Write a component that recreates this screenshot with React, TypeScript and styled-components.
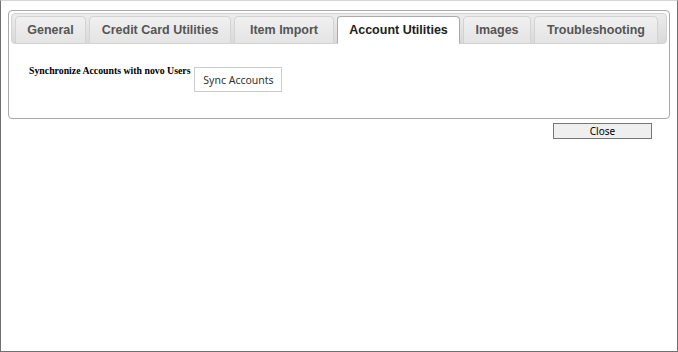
import React from "react";
import styled, { createGlobalStyle } from "styled-components";

const Global = createGlobalStyle`
  html, body { margin: 0; padding: 0; background: #fff; }
  * { box-sizing: border-box; }
`;

const Frame = styled.div`
  width: 678px;
  height: 352px;
  border: 1px solid #707070;
  border-top-color: #d6d6d6;
  background: #fff;
  padding: 9px 0 0 7px;
  display: flex;
  flex-direction: column;
`;

const Panel = styled.div`
  width: 662px;
  height: 109px;
  border: 1px solid #aaaaaa;
  border-radius: 4px;
  padding: 2px 2px 0 2px;
  display: flex;
  flex-direction: column;
`;

const Nav = styled.div`
  height: 31px;
  border: 1px solid #d3d3d3;
  border-radius: 4px;
  background: linear-gradient(#ececec, #d9d9d9);
  padding: 2px 0 0 3px;
  display: flex;
  gap: 3px;
  align-items: flex-start;
`;

const Tab = styled.div<{ $active?: boolean; $w: number }>`
  width: ${(p) => p.$w}px;
  height: 28px;
  margin-bottom: -1px;
  border: 1px solid ${(p) => (p.$active ? "#aaaaaa" : "#d3d3d3")};
  border-bottom-color: ${(p) => (p.$active ? "#ffffff" : "#d3d3d3")};
  border-radius: 4px 4px 0 0;
  background: ${(p) => (p.$active ? "#ffffff" : "linear-gradient(#f0f0f0, #e4e4e4)")};
  color: ${(p) => (p.$active ? "#212121" : "#555555")};
  font-family: "Liberation Sans", Arial, sans-serif;
  font-weight: bold;
  font-size: 12.5px;
  line-height: 26px;
  text-align: center;
  white-space: nowrap;
`;

const Content = styled.div`
  padding: 20px 0 0 18px;
  display: flex;
  align-items: flex-start;
  gap: 4px;
`;

const Label = styled.span`
  font-family: "Liberation Serif", "Times New Roman", serif;
  font-weight: bold;
  font-size: 9.8px;
  line-height: 12px;
  color: #000;
  padding-top: 1px;
`;

const SyncButton = styled.button`
  margin-top: 3px;
  width: 88px;
  height: 25px;
  border: 1px solid #cccccc;
  background: #fff;
  color: #333;
  font-family: "Noto Sans", "Open Sans", sans-serif;
  font-size: 10.5px;
  padding: 0;
  cursor: pointer;
`;

const Footer = styled.div`
  width: 662px;
  display: flex;
  justify-content: flex-end;
  padding: 4px 18px 0 0;
`;

const CloseButton = styled.button`
  width: 99px;
  height: 16px;
  border: 1px solid #767676;
  border-radius: 0;
  background: #efefef;
  color: #000;
  font-family: "Noto Sans", "Open Sans", sans-serif;
  font-size: 10px;
  line-height: 12px;
  padding: 0;
  cursor: pointer;
`;

const tabs: { label: string; w: number }[] = [
  { label: "General", w: 71 },
  { label: "Credit Card Utilities", w: 142 },
  { label: "Item Import", w: 100 },
  { label: "Account Utilities", w: 123 },
  { label: "Images", w: 68 },
  { label: "Troubleshooting", w: 124 },
];

export default function App() {
  return (
    <>
      <Global />
      <Frame>
        <Panel>
          <Nav>
            {tabs.map((t) => (
              <Tab key={t.label} $w={t.w} $active={t.label === "Account Utilities"}>
                {t.label}
              </Tab>
            ))}
          </Nav>
          <Content>
            <Label>Synchronize Accounts with novo Users</Label>
            <SyncButton>Sync Accounts</SyncButton>
          </Content>
        </Panel>
        <Footer>
          <CloseButton>Close</CloseButton>
        </Footer>
      </Frame>
    </>
  );
}
